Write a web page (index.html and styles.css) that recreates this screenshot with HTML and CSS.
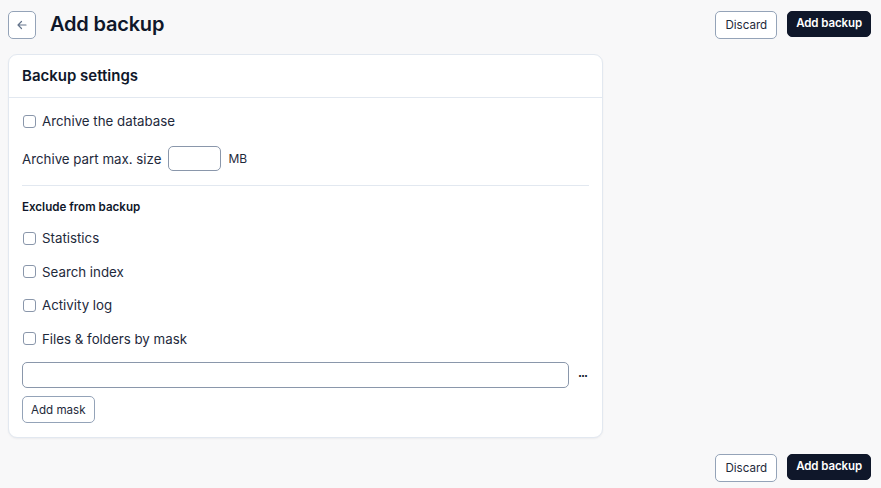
FILE: index.html
```html
<!DOCTYPE html>
<html lang="en">
<head>
    <meta charset="UTF-8">
    <meta name="viewport" content="width=device-width, initial-scale=1.0">
    <title>Add backup</title>
    <link rel="stylesheet" href="styles.css">
</head>
<body>
    <div class="page-header">
        <div class="title-group">
            <button class="back-btn" aria-label="Back">
                <svg width="12" height="12" viewBox="0 0 12 12" fill="none" stroke="#64748b" stroke-width="1.2" stroke-linecap="round" stroke-linejoin="round">
                    <path d="M10 6H2M5.5 2.5L2 6l3.5 3.5"/>
                </svg>
            </button>
            <h1>Add backup</h1>
        </div>
        <div class="actions">
            <button class="btn btn-outline">Discard</button>
            <button class="btn btn-dark">Add backup</button>
        </div>
    </div>

    <div class="card">
        <div class="card-header">Backup settings</div>
        <div class="card-body">
            <label class="check-row"><input type="checkbox"> Archive the database</label>

            <div class="size-row">
                <span>Archive part max. size</span>
                <input type="text" class="size-input">
                <span class="unit">MB</span>
            </div>

            <hr class="divider">

            <div class="section-title">Exclude from backup</div>

            <div class="check-list">
                <label class="check-row"><input type="checkbox"> Statistics</label>
                <label class="check-row"><input type="checkbox"> Search index</label>
                <label class="check-row"><input type="checkbox"> Activity log</label>
                <label class="check-row"><input type="checkbox"> Files &amp; folders by mask</label>
            </div>

            <div class="mask-row">
                <input type="text" class="mask-input">
                <span class="more">&middot;&middot;&middot;</span>
            </div>

            <button class="btn btn-outline add-mask">Add mask</button>
        </div>
    </div>

    <div class="actions bottom-actions">
        <button class="btn btn-outline">Discard</button>
        <button class="btn btn-dark">Add backup</button>
    </div>
</body>
</html>
```

FILE: styles.css
```css
body {
    font-family: Inter, "Noto Sans", sans-serif;
    margin: 0;
    padding: 11px 10px 0 8px;
    background-color: #f8f8f9;
    color: #0f172a;
}
.page-header {
    display: flex;
    justify-content: space-between;
    align-items: center;
}
.title-group {
    display: flex;
    align-items: center;
    gap: 14px;
}
h1 {
    margin: -2px 0 0 0;
    font-size: 20px;
    font-weight: 600;
    line-height: 26px;
    letter-spacing: -0.2px;
}
.back-btn {
    width: 28px;
    height: 28px;
    padding: 0;
    display: flex;
    align-items: center;
    justify-content: center;
    background: #fff;
    border: 1px solid #94a3b8;
    border-radius: 5px;
    cursor: pointer;
}
.actions {
    display: flex;
    gap: 10px;
    align-items: flex-start;
}
.btn {
    font-family: inherit;
    font-size: 11.6px;
    line-height: 16px;
    padding: 5px 9px;
    border-radius: 5px;
    cursor: pointer;
}
.btn-outline {
    height: 28px;
    background: #fff;
    border: 1px solid #94a3b8;
    color: #1e293b;
}
.btn-dark {
    height: 26px;
    padding: 3px 8px 5px;
    background: #0f172a;
    border: 1px solid #0f172a;
    color: #fff;
    font-size: 11.5px;
    font-weight: 600;
    letter-spacing: -0.1px;
}
.card {
    width: 593px;
    margin-top: 15px;
    background: #fff;
    border: 1px solid #e2e8f0;
    border-radius: 9px;
    box-shadow: 0 1px 2px rgba(15, 23, 42, 0.05);
}
.card-header {
    padding: 12px 13px;
    font-size: 15px;
    line-height: 18px;
    font-weight: 600;
    border-bottom: 1px solid #e2e8f0;
}
.card-body {
    padding: 13px 13px 14px 13px;
    display: flex;
    flex-direction: column;
    align-items: flex-start;
    font-size: 13.3px;
}
.check-row {
    display: flex;
    align-items: center;
    gap: 6px;
    line-height: 20px;
    color: #1e293b;
}
.check-row input {
    appearance: none;
    width: 13px;
    height: 13px;
    margin: 0 0 0 1px;
    border: 1px solid #8a97ab;
    border-radius: 3px;
    background: #fff;
}
.size-row {
    display: flex;
    align-items: center;
    gap: 7px;
    margin-top: 15px;
    color: #1e293b;
}
.size-input {
    width: 53px;
    height: 25px;
    box-sizing: border-box;
    border: 1px solid #8a97ab;
    border-radius: 5px;
}
.unit {
    font-size: 12px;
}
.divider {
    align-self: stretch;
    border: none;
    border-top: 1px solid #e2e8f0;
    margin: 14px 0 0 0;
}
.section-title {
    margin-top: 13px;
    font-size: 11.6px;
    line-height: 16px;
    font-weight: 600;
}
.check-list {
    display: flex;
    flex-direction: column;
    gap: 13.5px;
    margin-top: 13px;
}
.mask-row {
    align-self: stretch;
    display: flex;
    align-items: center;
    gap: 9px;
    margin-top: 13.5px;
}
.mask-input {
    flex: 1;
    height: 26px;
    box-sizing: border-box;
    border: 1px solid #8a97ab;
    border-radius: 5px;
}
.more {
    font-size: 12px;
    font-weight: 700;
    letter-spacing: -1px;
    width: 11px;
}
.add-mask {
    margin-top: 8px;
    height: 27px;
    padding: 5px 8px;
}
.bottom-actions {
    justify-content: flex-end;
    margin-top: 16px;
}
```
